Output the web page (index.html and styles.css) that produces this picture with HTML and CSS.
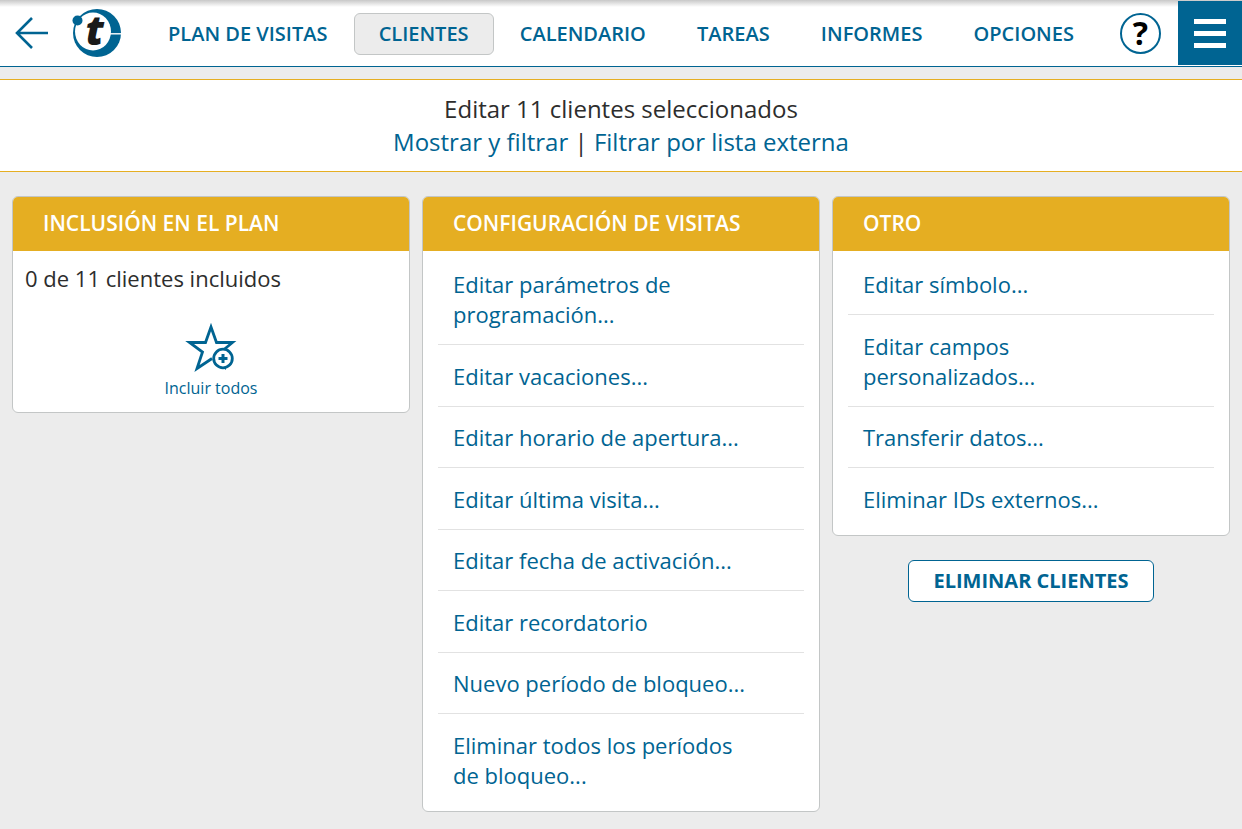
FILE: index.html
```html
<!DOCTYPE html>
<html lang="es">
  <head>
    <meta charset="UTF-8" />
    <meta name="viewport" content="width=device-width, initial-scale=1.0" />
    <title>Editar clientes</title>
    <link rel="stylesheet" href="styles.css">
  </head>
  <body>
    <header class="topbar">
      <a class="back" href="#" aria-label="Atrás">
        <svg width="34" height="34" viewBox="0 0 34 34">
          <path d="M33 17H2M17 2L2 17l15 15" fill="none" stroke="#006492" stroke-width="2.6" />
        </svg>
      </a>
      <a class="logo" href="#" aria-label="Inicio">
        <svg width="50" height="50" viewBox="0 0 50 50">
          <circle cx="25" cy="25" r="24" fill="#006492" />
          <ellipse cx="21" cy="23.500" rx="18" ry="19" fill="#fff" />
          <path d="M38 25.800H50" stroke="#fff" stroke-width="1.400" />
          <circle cx="5.500" cy="12.500" r="5" fill="#006492" />
          <text class="logo-letter" x="23" y="37" text-anchor="middle">t</text>
        </svg>
      </a>
      <nav class="nav">
        <a href="#">PLAN DE VISITAS</a>
        <a class="active" href="#">CLIENTES</a>
        <a href="#">CALENDARIO</a>
        <a href="#">TAREAS</a>
        <a href="#">INFORMES</a>
        <a href="#">OPCIONES</a>
      </nav>
      <button class="help" type="button">?</button>
      <button class="menu" type="button" aria-label="Menú">
        <span></span>
        <span></span>
        <span></span>
      </button>
    </header>

    <section class="selection">
      <div>Editar 11 clientes seleccionados</div>
      <div><a href="#">Mostrar y filtrar</a> | <a href="#">Filtrar por lista externa</a></div>
    </section>

    <main class="columns">
      <section class="card">
        <h2>INCLUSIÓN EN EL PLAN</h2>
        <p class="status">0 de 11 clientes incluidos</p>
        <button class="include" type="button">
          <svg width="50" height="50" viewBox="0 0 50 50">
            <path d="M38 27.500L46.500 20.500H30.500L25 5L19.500 20.500H3.500L16.500 30L11 46.500L26 36.500" fill="none" stroke="#006492" stroke-width="2.800" />
            <path d="M35 44l5 4v-4z" fill="#006492" />
            <circle cx="37" cy="36.500" r="9.300" fill="#fff" stroke="#006492" stroke-width="2.800" />
            <path d="M37 32v9M32.500 36.500h9" stroke="#006492" stroke-width="3" />
          </svg>
          <span>Incluir todos</span>
        </button>
      </section>

      <section class="card">
        <h2>CONFIGURACIÓN DE VISITAS</h2>
        <ul class="links">
          <li><a href="#">Editar parámetros de programación...</a></li>
          <li><a href="#">Editar vacaciones...</a></li>
          <li><a href="#">Editar horario de apertura...</a></li>
          <li><a href="#">Editar última visita...</a></li>
          <li><a href="#">Editar fecha de activación...</a></li>
          <li><a href="#">Editar recordatorio</a></li>
          <li><a href="#">Nuevo período de bloqueo...</a></li>
          <li><a href="#">Eliminar todos los períodos de bloqueo...</a></li>
        </ul>
      </section>

      <div class="side">
        <section class="card">
          <h2>OTRO</h2>
          <ul class="links">
            <li><a href="#">Editar símbolo...</a></li>
            <li><a href="#">Editar campos personalizados...</a></li>
            <li><a href="#">Transferir datos...</a></li>
            <li><a href="#">Eliminar IDs externos...</a></li>
          </ul>
        </section>
        <button class="delete" type="button">ELIMINAR CLIENTES</button>
      </div>
    </main>
  </body>
</html>
```
FILE: styles.css
```css
* {
  box-sizing: border-box;
}
body {
  margin: 0;
  background: #ececec;
  color: #2d2d2d;
  font-family: "Open Sans", sans-serif;
  font-size: 22px;
  line-height: 30px;
}
a {
  color: #006492;
  text-decoration: none;
}
button {
  font-family: inherit;
  color: #006492;
  cursor: pointer;
}
svg {
  display: block;
  overflow: visible;
}
.topbar {
  display: flex;
  align-items: center;
  height: 67px;
  padding-left: 15px;
  background: linear-gradient(#c8c8c8, #fff 7px);
  border-bottom: 1px solid #006492;
}
.logo {
  margin-left: 23px;
}
.logo-letter {
  font-size: 40px;
  font-weight: 800;
  font-style: italic;
  fill: #1a1a1a;
}
.nav {
  flex: 1;
  display: flex;
  justify-content: space-between;
  margin: 2px 21px 0 21px;
}
.nav a {
  padding: 5px 24px;
  border: 1px solid transparent;
  border-radius: 6px;
  font-size: 20px;
  font-weight: 600;
  white-space: nowrap;
}
.nav .active {
  background: #ececec;
  border-color: #c3c6c6;
}
.help {
  width: 41px;
  height: 41px;
  padding: 0;
  border: 2px solid #006492;
  border-radius: 50%;
  background: #fff;
  color: #000;
  font-size: 32px;
  font-weight: 700;
  line-height: 36px;
}
.menu {
  display: flex;
  flex-direction: column;
  align-items: center;
  justify-content: center;
  gap: 7px;
  width: 64px;
  height: 64px;
  margin-left: 17px;
  padding: 0;
  border: 0;
  background: #006492;
}
.menu span {
  width: 32px;
  height: 5px;
  background: #fff;
}
.selection {
  margin-top: 12px;
  padding: 12px 12px 13px;
  border: solid #e5ae22;
  border-width: 1px 0;
  background: #fff;
  font-size: 24px;
  line-height: 33px;
  text-align: center;
}
.columns {
  display: grid;
  grid-template-columns: repeat(3, 1fr);
  align-items: start;
  gap: 12px;
  padding: 24px 12px 16px;
}
.card {
  overflow: hidden;
  border: 1px solid #c3c6c6;
  border-radius: 6px;
  background: #fff;
}
.card h2 {
  margin: 0;
  padding: 11px 30px 13px;
  background: #e5ae22;
  color: #fff;
  font-size: 21px;
  font-weight: 600;
}
.status {
  margin: 0;
  padding: 12px;
}
.include {
  display: block;
  margin: 17px auto 13px;
  padding: 0;
  border: 0;
  background: none;
  font-size: 16px;
  line-height: 22px;
}
.include svg {
  margin: 0 auto 5px;
}
.links {
  margin: 0;
  padding: 3px 15px 6px;
  list-style: none;
}
.links li {
  padding: 16px 50px 15px 15px;
  border-bottom: 1px solid #e2e2e2;
}
.links li:nth-child(odd) {
  padding-top: 15px;
}
.links li:last-child {
  border-bottom: 0;
}
.side {
  display: flex;
  flex-direction: column;
  align-items: center;
  gap: 24px;
}
.side .card {
  width: 100%;
}
.delete {
  padding: 5px 25px;
  border: 1px solid #006492;
  border-radius: 6px;
  background: #fff;
  font-size: 20px;
  font-weight: 700;
  line-height: 30px;
}
```
